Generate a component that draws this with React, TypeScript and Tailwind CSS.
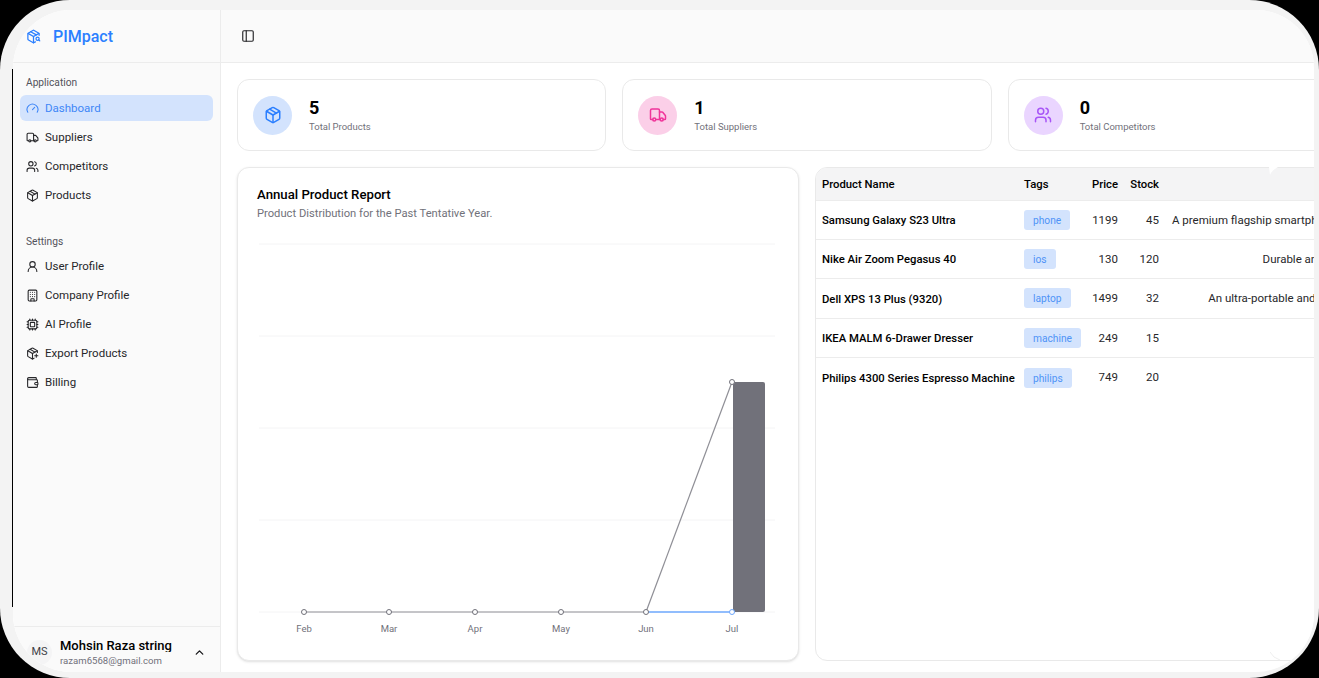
import { Building, ChevronUp, Cpu, Gauge, Package, PackagePlus, PackageSearch, PanelLeft, Truck, UserRound, Users, Wallet } from "lucide-react"

const appLinks = [
	{ label: "Dashboard", icon: Gauge, active: true },
	{ label: "Suppliers", icon: Truck },
	{ label: "Competitors", icon: Users },
	{ label: "Products", icon: Package },
]

const settingLinks = [
	{ label: "User Profile", icon: UserRound },
	{ label: "Company Profile", icon: Building },
	{ label: "AI Profile", icon: Cpu },
	{ label: "Export Products", icon: PackagePlus },
	{ label: "Billing", icon: Wallet },
]

const stats = [
	{ value: "5", label: "Total Products", icon: Package, circle: "bg-[#d3e3fd]", color: "text-[#2b7fff]" },
	{ value: "1", label: "Total Suppliers", icon: Truck, circle: "bg-[#fbcfe8]", color: "text-[#f0359a]" },
	{ value: "0", label: "Total Competitors", icon: Users, circle: "bg-[#ead5ff]", color: "text-[#a855f7]" },
]

const products = [
	{ name: "Samsung Galaxy S23 Ultra", tag: "phone", price: 1199, stock: 45, desc: "A premium flagship smartphone with a pro-grade camera, a bright display and all-day battery life." },
	{ name: "Nike Air Zoom Pegasus 40", tag: "ios", price: 130, stock: 120, desc: "Durable and responsive running shoes for daily use." },
	{ name: "Dell XPS 13 Plus (9320)", tag: "laptop", price: 1499, stock: 32, desc: "An ultra-portable and powerful laptop with stunning edge-to-edge screen." },
	{ name: "IKEA MALM 6-Drawer Dresser", tag: "machine", price: 249, stock: 15, desc: "" },
	{ name: "Philips 4300 Series Espresso Machine", tag: "philips", price: 749, stock: 20, desc: "" },
]

const months = ["Feb", "Mar", "Apr", "May", "Jun", "Jul"]
const monthX = [45, 130, 216, 302, 387, 473]

function NavGroup({ title, links, className, listClass }: { title: string; links: typeof appLinks; className: string; listClass: string }) {
	return (
		<div className={className}>
			<p className="pl-[6px] text-[10.2px] leading-[14px] text-[#52525b]">{title}</p>
			<ul className={`${listClass} space-y-[3px]`}>
				{links.map((link) => (
					<li
						key={link.label}
						className={`flex h-[26px] items-center gap-[6px] rounded-md pl-[6px] text-[11.5px] ${
							link.active ? "bg-[#d3e3fd] text-[#4087f7]" : "text-[#27272a]"
						}`}
					>
						<link.icon size={13} strokeWidth={2} />
						{link.label}
					</li>
				))}
			</ul>
		</div>
	)
}

function Chart() {
	return (
		<svg width="522" height="400" viewBox="0 0 522 400" className="mt-[18px] ml-[2px]">
			{[0, 92, 184, 276, 368].map((y) => (
				<line key={y} x1="0" x2="516" y1={y + 4} y2={y + 4} stroke="#f4f4f5" />
			))}
			<rect x="474" y="142" width="32" height="230" rx="2" fill="#71717a" />
			<line x1="45" x2="387" y1="372" y2="372" stroke="#8f8f96" strokeWidth="1.2" />
			<line x1="387" x2="473" y1="372" y2="372" stroke="#6ea8fe" strokeWidth="1.4" />
			<line x1="387" x2="473" y1="372" y2="142" stroke="#8f8f96" strokeWidth="1.2" />
			{monthX.map((x, i) => (
				<g key={x}>
					<circle cx={x} cy="372" r="2.5" fill="#fff" stroke={i === 5 ? "#6ea8fe" : "#71717a"} />
					<text x={x} y="392" textAnchor="middle" fontSize="9.5" fill="#71717a">
						{months[i]}
					</text>
				</g>
			))}
			<circle cx="473" cy="142" r="2.5" fill="#fff" stroke="#71717a" />
		</svg>
	)
}

export default function App() {
	return (
		<div className="h-[678px] w-[1319px] overflow-hidden bg-black font-['Roboto',sans-serif]">
			<div className="relative h-full rounded-[70px] bg-[#f3f3f3] pt-[10px] pr-[5px] pb-[6px] pl-[13px]">
				<div className="relative flex h-full overflow-hidden rounded-[58px] bg-white">
					<aside className="flex w-[208px] shrink-0 flex-col border-r border-[#ececec] bg-[#fafafa]">
						<div className="flex h-[53px] shrink-0 items-center gap-[12px] border-b border-[#ececec] pl-[13px] text-[#2b7fff]">
							<PackageSearch size={15} />
							<span className="mt-[1px] text-[16px] font-medium">PIMpact</span>
						</div>
						<NavGroup title="Application" links={appLinks} className="mt-[13px] px-[7px]" listClass="mt-[5.4px]" />
						<NavGroup title="Settings" links={settingLinks} className="mt-[26.6px] px-[7px]" listClass="mt-[5px]" />
						<div className="mt-auto flex h-[46px] items-center border-t border-[#ececec] pt-[5px] pl-[14px]">
							<div className="flex size-[25px] items-center justify-center rounded-full bg-[#f4f4f5] text-[11px] text-[#3f3f46]">MS</div>
							<div className="ml-[8px] w-[130px]">
								<p className="h-[14px] overflow-hidden text-[13px] leading-[15px] font-medium whitespace-nowrap text-black">Mohsin Raza string</p>
								<p className="mt-[2px] h-[12px] overflow-hidden text-[9.6px] leading-[14px] whitespace-nowrap text-[#71717a]">razam6568@gmail.com</p>
							</div>
							<ChevronUp size={13} strokeWidth={2.5} className="ml-[3px] text-[#18181b]" />
						</div>
					</aside>

					<main className="flex min-w-0 flex-1 flex-col">
						<header className="flex h-[53px] shrink-0 items-center border-b border-[#ececec] bg-[#fafafa] pl-[20px]">
							<PanelLeft size={14} className="text-[#27272a]" />
						</header>

						<div className="w-[1156px] pt-[16px] pl-[16px]">
							<div className="grid grid-cols-3 gap-4">
								{stats.map((stat) => (
									<div key={stat.label} className="flex h-[72px] items-center gap-[17px] rounded-xl border border-[#e9e9e9] bg-white pl-[15px]">
										<div className={`flex size-[39px] items-center justify-center rounded-full ${stat.circle} ${stat.color}`}>
											<stat.icon size={18} />
										</div>
										<div>
											<p className="text-[18px] leading-[24px] font-bold text-black">{stat.value}</p>
											<p className="text-[9.5px] leading-[14px] text-[#71717a]">{stat.label}</p>
										</div>
									</div>
								))}
							</div>

							<div className="mt-4 grid grid-cols-2 gap-4">
								<div className="h-[494px] rounded-xl border border-[#e9e9e9] bg-white pt-[18px] pl-[19px] shadow-sm">
									<h2 className="text-[13.2px] leading-[18px] font-medium text-black">Annual Product Report</h2>
									<p className="mt-[2px] text-[11.2px] leading-[16px] text-[#71717a]">Product Distribution for the Past Tentative Year.</p>
									<Chart />
								</div>

								<div className="h-[494px] overflow-hidden rounded-xl border border-[#e9e9e9] bg-white">
									<table className="w-[800px] table-fixed text-[11.5px] text-[#27272a]">
										<colgroup>
											<col className="w-[208px]" />
											<col className="w-[59px]" />
											<col className="w-[35px]" />
											<col className="w-[41px]" />
											<col />
										</colgroup>
										<thead>
											<tr className="h-[32px] border-b border-[#ececec] bg-[#f4f4f5] text-left text-[11.3px] text-black">
												<th className="pt-[3px] pl-[6px] font-medium">Product Name</th>
												<th className="pt-[3px] font-medium">Tags</th>
												<th className="pt-[3px] text-right font-medium">Price</th>
												<th className="pt-[3px] text-right font-medium">Stock</th>
												<th />
											</tr>
										</thead>
										<tbody>
											{products.map((product) => (
												<tr key={product.name} className="h-[39.4px] border-b border-[#ececec] last:border-b-0">
													<td className="pt-[3px] pl-[6px] text-[11.3px] font-medium whitespace-nowrap text-black">{product.name}</td>
													<td>
														<span className="inline-block rounded-[3px] bg-[#d3e3fd] px-[9px] pt-[3px] pb-[2px] text-[10.2px] leading-[15px] text-[#4f93f7]">{product.tag}</span>
													</td>
													<td className="pt-[1px] text-right">{product.price}</td>
													<td className="pt-[1px] text-right">{product.stock}</td>
													<td className="overflow-hidden pt-[1px] pl-[13px] text-center whitespace-nowrap">{product.desc}</td>
												</tr>
											))}
										</tbody>
									</table>
								</div>
							</div>
						</div>
					</main>
				</div>
				<span className="absolute top-[69px] left-[12px] h-[538px] w-px bg-black" />
				{/* small corner marks that sit over the table card */}
				<svg width="10" height="9" viewBox="0 0 10 9" className="absolute top-[167px] left-[1269px]">
					<path d="M0 0H9Q3 3 1 8Z" fill="#fff" />
				</svg>
				<svg width="12" height="10" viewBox="0 0 12 10" className="absolute top-[651px] left-[1270px]">
					<path d="M0 1Q3 7 10 9" fill="none" stroke="#efefef" />
				</svg>
			</div>
		</div>
	)
}
